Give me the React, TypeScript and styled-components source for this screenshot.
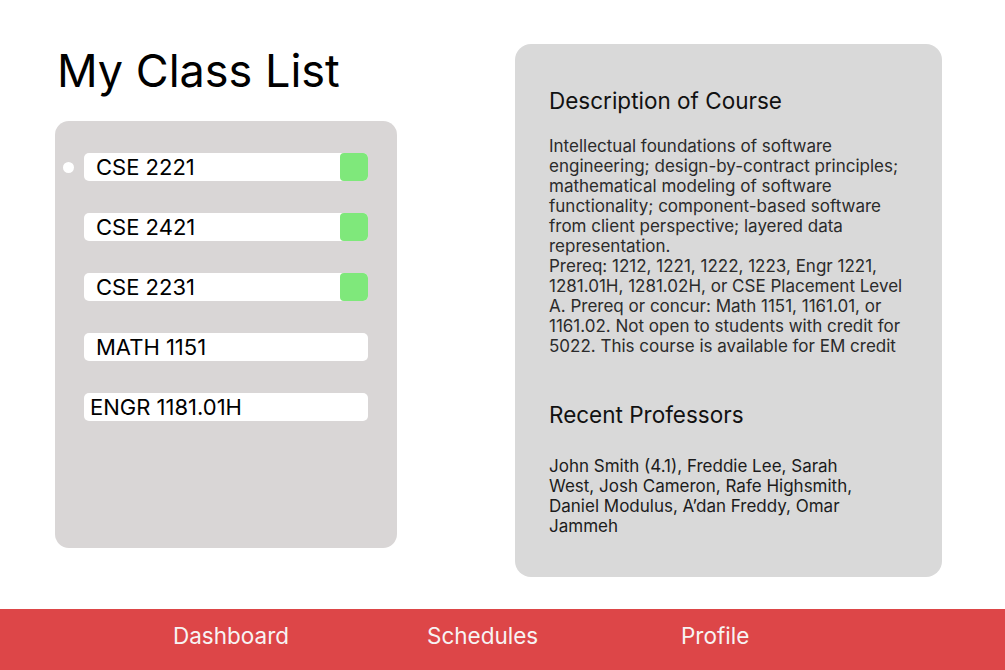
import React from "react";
import styled, { createGlobalStyle } from "styled-components";

type Course = { code: string; active?: boolean; selected?: boolean; tight?: boolean };

const courses: Course[] = [
  { code: "CSE 2221", active: true, selected: true },
  { code: "CSE 2421", active: true },
  { code: "CSE 2231", active: true },
  { code: "MATH 1151" },
  { code: "ENGR 1181.01H", tight: true },
];

const App = () => {
  return (
    <PageSC>
      <GlobalStyle />
      <MainSC>
        <LeftColumnSC>
          <TitleSC>My Class List</TitleSC>
          <ClassPanelSC>
            {courses.map((c) => (
              <ClassRowSC key={c.code}>
                <DotSC $visible={!!c.selected} />
                <ClassBarSC>
                  <ClassNameSC $tight={!!c.tight}>{c.code}</ClassNameSC>
                  {c.active && <StatusSC />}
                </ClassBarSC>
              </ClassRowSC>
            ))}
          </ClassPanelSC>
        </LeftColumnSC>
        <DetailPanelSC>
          <HeadingSC>Description of Course</HeadingSC>
          <DescriptionSC>
            Intellectual foundations of software engineering; design-by-contract
            principles; mathematical modeling of software functionality;
            component-based software from client perspective; layered data
            representation.
            <br />
            Prereq: 1212, 1221, 1222, 1223, Engr 1221, 1281.01H, 1281.02H, or CSE
            Placement Level A. Prereq or concur: Math 1151, 1161.01, or 1161.02.
            Not open to students with credit for 5022. This course is available
            for EM credit
          </DescriptionSC>
          <HeadingSC $top={45}>Recent Professors</HeadingSC>
          <ProfessorsSC>
            John Smith (4.1), Freddie Lee, Sarah West, Josh Cameron, Rafe
            Highsmith, Daniel Modulus, A’dan Freddy, Omar Jammeh
          </ProfessorsSC>
        </DetailPanelSC>
      </MainSC>
      <NavSC>
        <NavItemSC>Dashboard</NavItemSC>
        <NavItemSC>Schedules</NavItemSC>
        <NavItemSC>Profile</NavItemSC>
      </NavSC>
    </PageSC>
  );
};

const GlobalStyle = createGlobalStyle`
  html, body {
    margin: 0;
    padding: 0;
    background: #ffffff;
    font-family: Inter, "Noto Sans", sans-serif;
  }
`;

const PageSC = styled.div`
  width: 1005px;
  height: 670px;
  display: flex;
  flex-direction: column;
  overflow: hidden;
`;

const MainSC = styled.div`
  height: 609px;
  display: flex;
  align-items: flex-start;
  padding-left: 55px;
  box-sizing: border-box;
`;

const LeftColumnSC = styled.div`
  width: 342px;
  padding-top: 42px;
`;

const TitleSC = styled.h1`
  margin: 0 0 21px 2px;
  font-size: 45px;
  font-weight: 400;
  line-height: 58px;
  color: #000;
`;

const ClassPanelSC = styled.div`
  height: 427px;
  box-sizing: border-box;
  background: #d9d6d6;
  border-radius: 14px;
  padding: 32px 29px 0 8px;
  display: flex;
  flex-direction: column;
  gap: 32px;
`;

const ClassRowSC = styled.div`
  display: flex;
  align-items: center;
  gap: 10px;
`;

const DotSC = styled.span<{ $visible: boolean }>`
  width: 11px;
  height: 11px;
  border-radius: 50%;
  background: #ffffff;
  flex: none;
  visibility: ${(p) => (p.$visible ? "visible" : "hidden")};
`;

const ClassBarSC = styled.div`
  flex: 1;
  height: 28px;
  background: #ffffff;
  border-radius: 5px;
  overflow: hidden;
  display: flex;
  align-items: center;
`;

const ClassNameSC = styled.span<{ $tight: boolean }>`
  flex: 1;
  padding-left: ${(p) => (p.$tight ? "6px" : "12px")};
  font-size: 22px;
  line-height: 28px;
  color: #000;
`;

const StatusSC = styled.span`
  width: 28px;
  height: 28px;
  background: #7fe87b;
  border-radius: 4px;
`;

const DetailPanelSC = styled.div`
  margin: 44px 0 0 118px;
  width: 427px;
  height: 533px;
  box-sizing: border-box;
  background: #d9d9d9;
  border-radius: 16px;
  padding: 43px 0 0 34px;
`;

const HeadingSC = styled.h2<{ $top?: number }>`
  margin: ${(p) => p.$top ?? 0}px 0 0 0;
  font-size: 22.5px;
  font-weight: 400;
  line-height: 28px;
  color: #111;
`;

const DescriptionSC = styled.p`
  margin: 21px 0 0 0;
  width: 366px;
  font-size: 17px;
  line-height: 20px;
  color: #2b2b2b;
`;

const ProfessorsSC = styled.p`
  margin: 27px 0 0 0;
  width: 320px;
  font-size: 17px;
  line-height: 20px;
  color: #1c1c1c;
`;

const NavSC = styled.nav`
  height: 61px;
  background: #dd4648;
  display: flex;
  align-items: center;
  padding: 0 0 8px 173px;
  box-sizing: border-box;
`;

const NavItemSC = styled.a`
  width: 254px;
  font-size: 22.5px;
  line-height: 27px;
  color: #f7f3f3;
  cursor: pointer;
`;

export default App;
